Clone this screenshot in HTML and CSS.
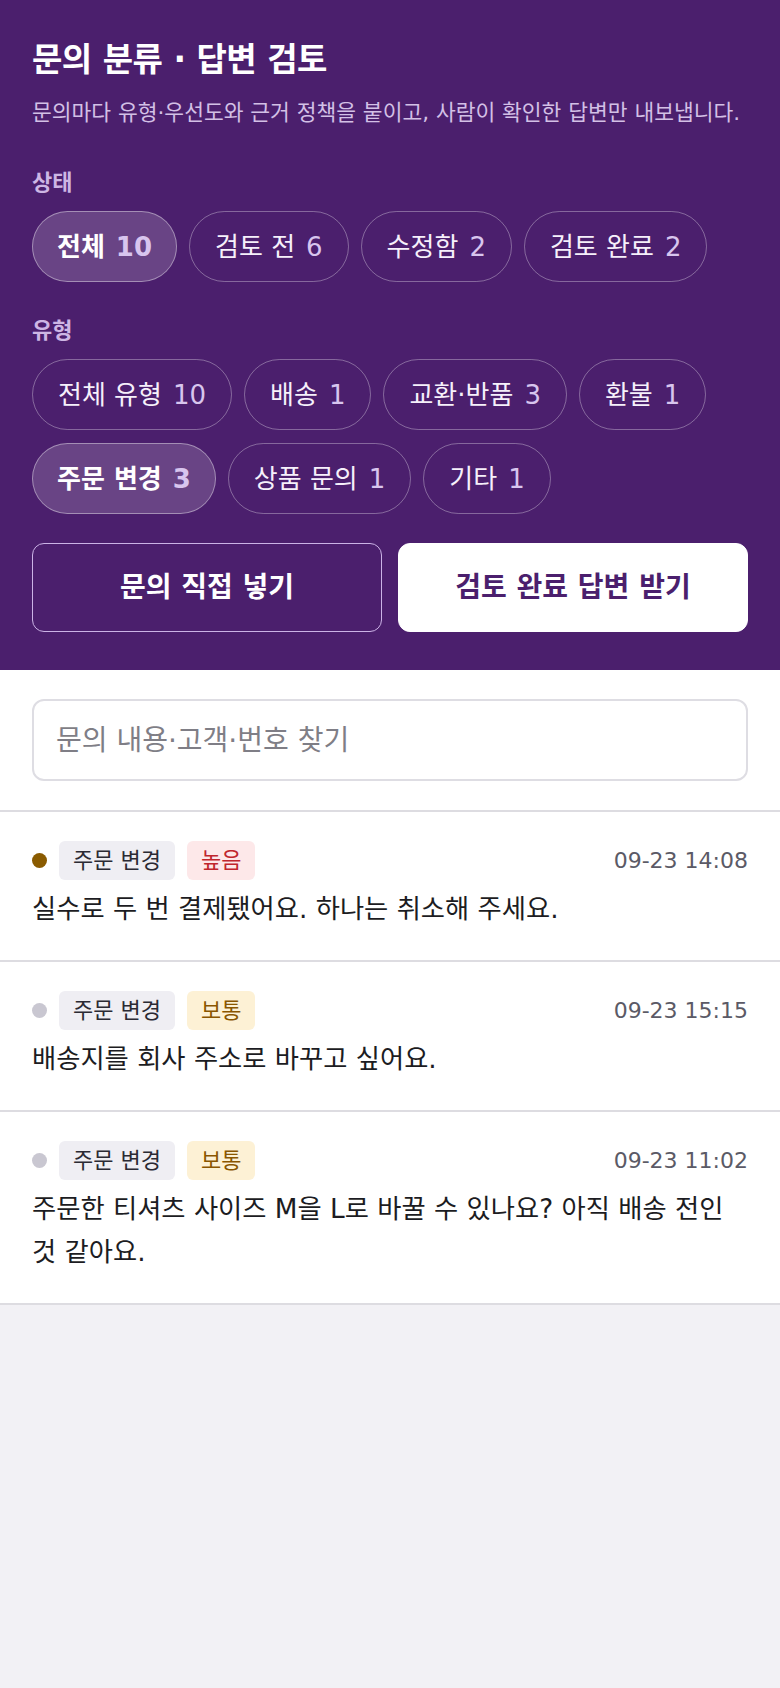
FILE: index.html
```html
<!DOCTYPE html>
<html lang="ko">
<head>
<meta charset="utf-8">
<title>문의 분류 · 답변 검토</title>
<link rel="stylesheet" href="styles.css">
</head>
<body>
<header class="top">
  <h1 class="title">문의 분류 · 답변 검토</h1>
  <p class="subtitle">문의마다 유형·우선도와 근거 정책을 붙이고, 사람이 확인한 답변만 내보냅니다.</p>

  <section class="group">
    <div class="group-label">상태</div>
    <div class="chips">
      <button class="chip is-active"><span class="chip-name">전체</span><span class="chip-count">10</span></button>
      <button class="chip"><span class="chip-name">검토 전</span><span class="chip-count">6</span></button>
      <button class="chip"><span class="chip-name">수정함</span><span class="chip-count">2</span></button>
      <button class="chip"><span class="chip-name">검토 완료</span><span class="chip-count">2</span></button>
    </div>
  </section>

  <section class="group">
    <div class="group-label">유형</div>
    <div class="chips">
      <button class="chip"><span class="chip-name">전체 유형</span><span class="chip-count">10</span></button>
      <button class="chip"><span class="chip-name">배송</span><span class="chip-count">1</span></button>
      <button class="chip"><span class="chip-name">교환·반품</span><span class="chip-count">3</span></button>
      <button class="chip"><span class="chip-name">환불</span><span class="chip-count">1</span></button>
      <button class="chip is-active"><span class="chip-name">주문 변경</span><span class="chip-count">3</span></button>
      <button class="chip"><span class="chip-name">상품 문의</span><span class="chip-count">1</span></button>
      <button class="chip"><span class="chip-name">기타</span><span class="chip-count">1</span></button>
    </div>
  </section>

  <div class="actions">
    <button class="btn btn-outline">문의 직접 넣기</button>
    <button class="btn btn-solid">검토 완료 답변 받기</button>
  </div>
</header>

<section class="search">
  <input class="search-input" type="text" placeholder="문의 내용·고객·번호 찾기">
</section>

<ul class="list">
  <li class="item">
    <div class="meta">
      <span class="dot dot-high"></span>
      <span class="tag tag-type">주문 변경</span>
      <span class="tag tag-high">높음</span>
      <span class="time">09-23 14:08</span>
    </div>
    <p class="text">실수로 두 번 결제됐어요. 하나는 취소해 주세요.</p>
  </li>
  <li class="item">
    <div class="meta">
      <span class="dot dot-normal"></span>
      <span class="tag tag-type">주문 변경</span>
      <span class="tag tag-normal">보통</span>
      <span class="time">09-23 15:15</span>
    </div>
    <p class="text">배송지를 회사 주소로 바꾸고 싶어요.</p>
  </li>
  <li class="item">
    <div class="meta">
      <span class="dot dot-normal"></span>
      <span class="tag tag-type">주문 변경</span>
      <span class="tag tag-normal">보통</span>
      <span class="time">09-23 11:02</span>
    </div>
    <p class="text">주문한 티셔츠 사이즈 M을 L로 바꿀 수 있나요? 아직 배송 전인 것 같아요.</p>
  </li>
</ul>
</body>
</html>
```

FILE: styles.css
```css
* { box-sizing: border-box; }

html, body {
  margin: 0;
  padding: 0;
}

body {
  background: #f2f1f5;
  font-family: "DejaVu Sans", "Noto Sans CJK KR", sans-serif;
  color: #1c1c22;
}

.top {
  background: #4b1f6d;
  padding: 37px 32px 38px;
  color: #ffffff;
}

.title {
  margin: 0;
  font-size: 33px;
  line-height: 46px;
  letter-spacing: -0.5px;
  font-weight: 700;
  color: #ffffff;
}

.subtitle {
  margin: 15px 0 0;
  font-size: 21.5px;
  line-height: 30px;
  color: #d3c0e6;
}

.group {
  margin-top: 41px;
}

.group + .group {
  margin-top: 35px;
}

.group-label {
  font-size: 22px;
  line-height: 28px;
  font-weight: 600;
  color: #cdb6e4;
}

.chips {
  margin-top: 14px;
  display: flex;
  flex-wrap: wrap;
  gap: 13px 12px;
}

.chip {
  display: flex;
  align-items: center;
  gap: 11px;
  height: 71px;
  padding: 0 25px;
  border: 1.5px solid rgba(255, 255, 255, 0.33);
  border-radius: 999px;
  background: transparent;
  font-family: inherit;
  font-size: 26px;
  line-height: 36px;
  font-weight: 400;
  color: #f6f0fb;
  cursor: pointer;
}

.chip-count {
  color: #d8c5ee;
}

.chip.is-active {
  background: rgba(255, 255, 255, 0.17);
  border-color: rgba(255, 255, 255, 0.4);
  font-weight: 700;
  color: #ffffff;
  padding: 0 24px;
}

.actions {
  margin-top: 29px;
  display: grid;
  grid-template-columns: 1fr 1fr;
  gap: 16px;
}

.btn {
  height: 89px;
  font-family: inherit;
  font-size: 28px;
  line-height: 36px;
  font-weight: 700;
  padding: 0 16px;
  border-radius: 12px;
  cursor: pointer;
}

.btn-outline {
  background: transparent;
  border: 1.5px solid #cbb3e6;
  color: #ffffff;
}

.btn-solid {
  background: #ffffff;
  border: 1.5px solid #ffffff;
  color: #4b1f6d;
}

.search {
  background: #ffffff;
  padding: 29px 32px 29px;
  border-bottom: 2px solid #dddce1;
}

.search-input {
  display: block;
  width: 100%;
  height: 82px;
  padding: 0 22px;
  border: 2px solid #dedde3;
  border-radius: 12px;
  font-family: inherit;
  font-size: 28px;
  color: #1c1c22;
  background: #ffffff;
  outline: none;
}

.search-input::placeholder {
  color: #7f7e86;
}

.list {
  list-style: none;
  margin: 0;
  padding: 0;
  background: #ffffff;
}

.item {
  padding: 29px 32px 29px;
  border-bottom: 2px solid #dddce1;
}

.meta {
  display: flex;
  align-items: center;
  gap: 12px;
}

.dot {
  width: 15px;
  height: 15px;
  border-radius: 50%;
  flex: none;
}

.dot-high { background: #8a5b00; }
.dot-normal { background: #c9c7d1; }

.tag {
  font-size: 22px;
  line-height: 27px;
  padding: 6px 14px;
  border-radius: 6px;
}

.tag-type {
  background: #efeef3;
  color: #2b2a33;
}

.tag-high {
  background: #fde8e9;
  color: #c0262d;
}

.tag-normal {
  background: #fdf1d5;
  color: #8a5600;
}

.time {
  margin-left: auto;
  font-size: 22px;
  color: #5b5a66;
}

.text {
  margin: 8px 0 0;
  font-size: 26.3px;
  line-height: 43px;
  color: #1c1c22;
}
```
